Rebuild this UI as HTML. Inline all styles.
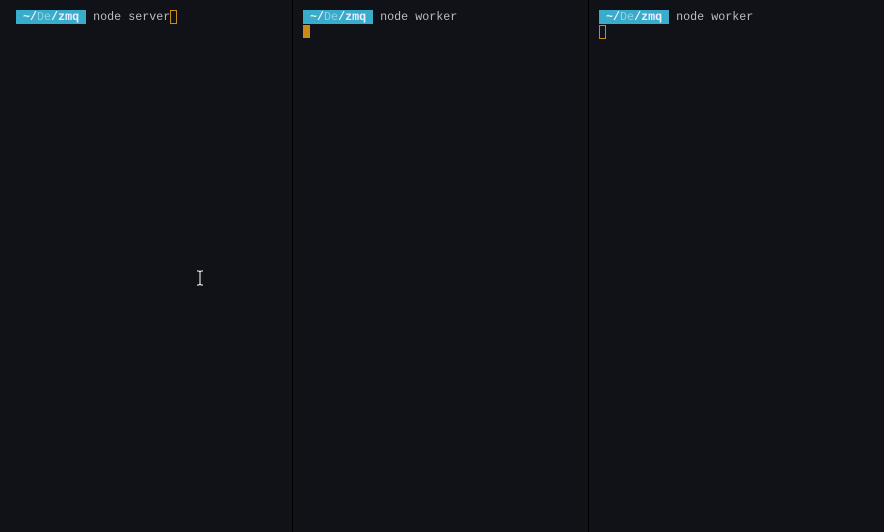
<!DOCTYPE html><html><head><style>
body{margin:0;width:884px;height:532px;background:#111217;overflow:hidden;position:relative;font-family:"Liberation Mono",monospace;font-size:11.7px;}
.div{position:absolute;top:0;width:1px;height:532px;background:#000;}
.line{position:absolute;top:10px;height:14px;line-height:14px;white-space:pre;color:#b9bcc2;}
.badge{background:#3aaccb;color:#eef;font-weight:bold;display:inline-block;padding:0 7px;height:14px;}
.badge .d{color:#8fd2e4;font-weight:normal}
.cur{position:absolute;width:5px;height:12px;border:1px solid #c98a1c;}
.curf{position:absolute;width:7px;height:13px;background:#c98a1c;}
</style></head><body>
<div class="div" style="left:292px"></div>
<div class="div" style="left:588px"></div>
<div class="line" style="left:16px"><span class="badge">~/<span class="d">De</span>/zmq</span> node server</div>
<div class="cur" style="left:170px;top:10px"></div>
<div class="line" style="left:303px"><span class="badge">~/<span class="d">De</span>/zmq</span> node worker</div>
<div class="curf" style="left:303px;top:25px"></div>
<div class="line" style="left:599px"><span class="badge">~/<span class="d">De</span>/zmq</span> node worker</div>
<div class="cur" style="left:599px;top:25px"></div>
<svg style="position:absolute;left:196px;top:270px" width="9" height="16"><path d="M1 1h2l1 1l1-1h2M4 2v12M1 15h2l1-1l1 1h2" stroke="#fff" fill="none" stroke-width="1"/></svg>
</body></html>
